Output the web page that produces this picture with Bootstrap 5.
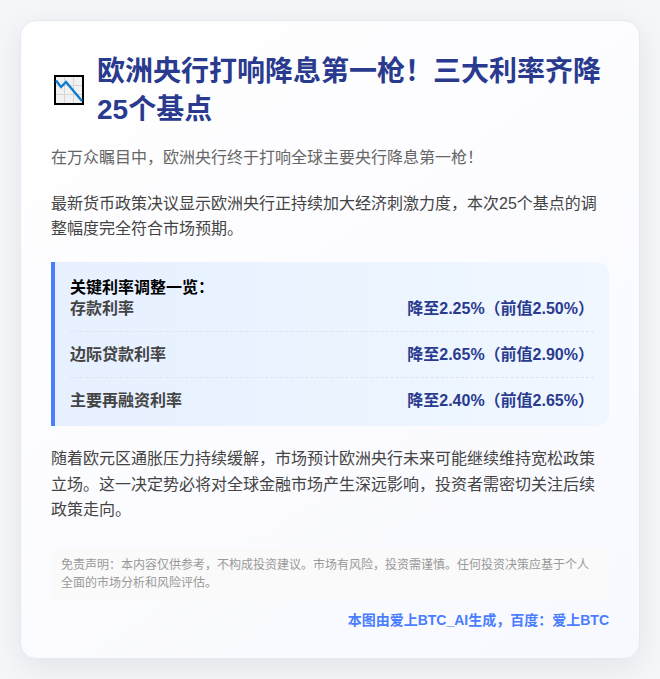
<!DOCTYPE html>
<html lang="zh">
<head>
<meta charset="utf-8">
<link href="https://cdn.jsdelivr.net/npm/bootstrap@5.3.0/dist/css/bootstrap.min.css" rel="stylesheet">
<style>
html,body{height:679px;overflow:hidden}
body{background:#f5f6fa;padding:20px;font-family:"Liberation Sans","Noto Sans CJK SC",sans-serif;font-size:16px;line-height:25.6px;color:#444}
.news-card{height:639px;padding:32px 30px 30px;border:1px solid #e6e8f0;border-radius:16px;background:linear-gradient(145deg,#fff,#f8f9ff);box-shadow:0 8px 30px rgba(0,0,0,.08)}
.news-head{margin-bottom:16px;padding-left:3px;gap:13px}
.news-icon{margin-bottom:2px}
.news-title{font-size:28px;line-height:38px;font-weight:700;color:#2a3b8f;margin:0}
.news-lead{color:#666;margin:0 0 20px}
.news-text{margin:0 0 20px}
.rate-box{background:linear-gradient(90deg,#e6f0ff,#f0f7ff);border-left:4px solid #4a7dff;border-radius:0 12px 12px 0;padding:15px 15px 2px;margin-bottom:20px}
.rate-head{line-height:22px;font-weight:700;color:#000}
.rate-row{padding:10px 0;border-bottom:1px dashed #dde3f0;font-weight:700}
.rate-first{padding:0 0 12px;line-height:20px}
.rate-row:last-child{border-bottom:0}
.rate-val{color:#2a3b8f}
.note-box{font-size:12px;line-height:18px;color:#999;background:#fafafa;border-radius:8px;padding:8px 10px;margin-top:25px}
.made-by{font-size:14px;line-height:18px;font-weight:700;color:#4a7dff;text-align:right;margin-top:11px}
</style>
</head>
<body>
<main class="news-card">
  <div class="news-head d-flex align-items-center">
    <svg width="30" height="30" viewBox="0 0 30 30" class="news-icon flex-shrink-0" aria-hidden="true">
      <rect x="1" y="1" width="28" height="28" fill="#f1f1f1" stroke="#000" stroke-width="2"/>
      <path d="M2 10.500H28M2 19.500H28M10.500 2V28M19.500 2V28" stroke="#d6d6d6" stroke-width="1" fill="none"/>
      <path d="M2 5.500L7 12L12 7L28 26" stroke="#0b7fd0" stroke-width="2.400" fill="none"/>
    </svg>
    <h1 class="news-title">欧洲央行打响降息第一枪！三大利率齐降25个基点</h1>
  </div>
  <p class="news-lead">在万众瞩目中，欧洲央行终于打响全球主要央行降息第一枪！</p>
  <p class="news-text">最新货币政策决议显示欧洲央行正持续加大经济刺激力度，本次25个基点的调整幅度完全符合市场预期。</p>
  <section class="rate-box">
    <div class="rate-head">关键利率调整一览：</div>
    <div class="rate-row rate-first d-flex justify-content-between"><span>存款利率</span><span class="rate-val">降至2.25%（前值2.50%）</span></div>
    <div class="rate-row d-flex justify-content-between"><span>边际贷款利率</span><span class="rate-val">降至2.65%（前值2.90%）</span></div>
    <div class="rate-row d-flex justify-content-between"><span>主要再融资利率</span><span class="rate-val">降至2.40%（前值2.65%）</span></div>
  </section>
  <p class="news-text mb-0">随着欧元区通胀压力持续缓解，市场预计欧洲央行未来可能继续维持宽松政策立场。这一决定势必将对全球金融市场产生深远影响，投资者需密切关注后续政策走向。</p>
  <div class="note-box">免责声明：本内容仅供参考，不构成投资建议。市场有风险，投资需谨慎。任何投资决策应基于个人全面的市场分析和风险评估。</div>
  <div class="made-by">本图由爱上BTC_AI生成，百度：爱上BTC</div>
</main>
<script src="https://cdn.jsdelivr.net/npm/bootstrap@5.3.0/dist/js/bootstrap.bundle.min.js"></script>
</body>
</html>
